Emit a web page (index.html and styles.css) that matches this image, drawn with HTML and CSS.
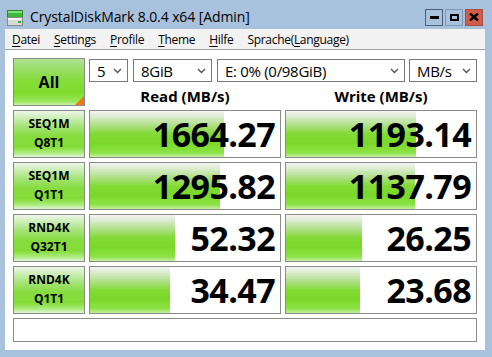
FILE: index.html
```html
<!DOCTYPE html>
<html>
  <head>
    <title>CrystalDiskMark</title>
    <link rel="stylesheet" href="styles.css">
  </head>
  <body>
    <div class="window">
      <div class="titlebar">
        <svg class="app-icon" width="16" height="16" viewBox="0 0 16 16">
          <rect x="0.5" y="0.5" width="15" height="7" fill="#3cb83c" stroke="#2a8a2a"/>
          <rect x="1" y="1" width="14" height="2" fill="#7ee07e"/>
          <rect x="0.5" y="7.5" width="15" height="8" fill="#d8d8d8" stroke="#8a8a8a"/>
          <rect x="1" y="8" width="14" height="2" fill="#f4f4f4"/>
          <rect x="11" y="11" width="3" height="2" fill="#2fb82f"/>
        </svg>
        <span class="title">CrystalDiskMark 8.0.4 x64 [Admin]</span>
        <div class="caption">
          <span class="cap-btn min"><svg width="9" height="3"><rect width="9" height="3" fill="#000"/></svg></span>
          <span class="cap-btn max"><svg width="9" height="7"><rect x="1" y="1" width="7" height="5" fill="none" stroke="#000" stroke-width="2"/></svg></span>
          <span class="cap-btn close"><svg width="10" height="8"><path d="M1 0.5 L9 7.5 M9 0.5 L1 7.5" stroke="#000" stroke-width="2.4"/></svg></span>
        </div>
      </div>
      <div class="client">
        <div class="menubar">
          <span class="menu-item"><u>D</u>atei</span>
          <span class="menu-item"><u>S</u>ettings</span>
          <span class="menu-item"><u>P</u>rofile</span>
          <span class="menu-item"><u>T</u>heme</span>
          <span class="menu-item"><u>H</u>ilfe</span>
          <span class="menu-item">Sprache(<u>L</u>anguage)</span>
        </div>
        <div class="bench">
          <div class="btn all">All<span class="corner"></span></div>
          <div class="head">
            <div class="combos">
              <div class="combo c-count">5<svg class="chev" width="9" height="6"><polyline points="1,1 4.5,4.5 8,1" fill="none" stroke="#555" stroke-width="1.4"/></svg></div>
              <div class="combo c-size">8GiB<svg class="chev" width="9" height="6"><polyline points="1,1 4.5,4.5 8,1" fill="none" stroke="#555" stroke-width="1.4"/></svg></div>
              <div class="combo c-drive">E: 0% (0/98GiB)<svg class="chev" width="9" height="6"><polyline points="1,1 4.5,4.5 8,1" fill="none" stroke="#555" stroke-width="1.4"/></svg></div>
              <div class="combo c-unit">MB/s<svg class="chev" width="9" height="6"><polyline points="1,1 4.5,4.5 8,1" fill="none" stroke="#555" stroke-width="1.4"/></svg></div>
            </div>
            <div class="heads">
              <div>Read (MB/s)</div>
              <div>Write (MB/s)</div>
            </div>
          </div>

          <div class="btn test">SEQ1M<br>Q8T1</div>
          <div class="cell"><div class="fill" style="width:134px"></div><span class="num">1664.27</span></div>
          <div class="cell"><div class="fill" style="width:130px"></div><span class="num">1193.14</span></div>

          <div class="btn test">SEQ1M<br>Q1T1</div>
          <div class="cell"><div class="fill" style="width:130px"></div><span class="num">1295.82</span></div>
          <div class="cell"><div class="fill" style="width:129px"></div><span class="num">1137.79</span></div>

          <div class="btn test">RND4K<br>Q32T1</div>
          <div class="cell"><div class="fill" style="width:85px"></div><span class="num">52.32</span></div>
          <div class="cell"><div class="fill" style="width:76px"></div><span class="num">26.25</span></div>

          <div class="btn test">RND4K<br>Q1T1</div>
          <div class="cell"><div class="fill" style="width:80px"></div><span class="num">34.47</span></div>
          <div class="cell"><div class="fill" style="width:74px"></div><span class="num">23.68</span></div>

          <div class="status"></div>
        </div>
      </div>
    </div>
  </body>
</html>
```

FILE: styles.css
```css
html, body {
  margin: 0;
  padding: 0;
}
body {
  background-color: #a8c1dd;
  font-family: "Open Sans", "Noto Sans", sans-serif;
  color: #000;
}
.window {
  width: 492px;
  height: 357px;
}
.titlebar {
  height: 29px;
  display: flex;
  align-items: center;
  padding-left: 7px;
  padding-right: 9px;
  box-sizing: border-box;
}
.app-icon {
  margin-top: 7px;
  flex: none;
}
.title {
  margin-left: 7px;
  margin-top: 4px;
  font-size: 14px;
  letter-spacing: -0.1px;
}
.caption {
  margin-left: auto;
  display: flex;
  gap: 2px;
  margin-top: 5px;
}
.cap-btn {
  width: 18px;
  height: 17px;
  box-sizing: border-box;
  border: 1px solid #5b6f8c;
  display: flex;
  align-items: center;
  justify-content: center;
}
.cap-btn.min {
  border-color: #4d5e78;
}
.cap-btn.max {
  border-color: #7f96b4;
}
.cap-btn.close {
  background-color: #cf5d49;
  border-color: #a8503f;
}
.client {
  margin: 0 7px 0 5px;
  height: 321px;
  background-color: #fff;
}
.menubar {
  height: 20px;
  background-color: #f2f2f2;
  border-bottom: 1px solid #a0a0a0;
  display: flex;
  align-items: center;
  font-size: 12px;
  letter-spacing: -0.3px;
}
.menu-item {
  padding: 0 7px;
}
.menu-item u {
  text-underline-offset: 2px;
}
.bench {
  display: grid;
  grid-template-columns: 72px 192px 192px;
  grid-template-rows: 48px 48px 48px 48px 48px 24px;
  column-gap: 4px;
  row-gap: 4px;
  padding: 8px 0 0 8px;
}
.btn {
  box-sizing: border-box;
  border: 1px solid #8a8a8a;
  background: linear-gradient(to bottom, #b0e294 0%, #9ade6a 20%, #84dc38 50%, #80dc30 75%, #98e65c 92%, #c8f2a8 100%);
  display: flex;
  align-items: center;
  justify-content: center;
  text-align: center;
  font-weight: bold;
}
.btn.all {
  position: relative;
  font-size: 16px;
}
.corner {
  position: absolute;
  right: 0;
  bottom: 0;
  width: 0;
  height: 0;
  border-left: 9px solid transparent;
  border-bottom: 9px solid #f07a12;
}
.btn.test {
  font-size: 12px;
  line-height: 19px;
  padding-bottom: 2px;
  background: linear-gradient(to bottom, #eef6ea 0%, #cdeeb6 15%, #a2e274 35%, #86dc3e 55%, #84dc38 78%, #a8ea78 90%, #e0f6d2 100%);
}
.head {
  grid-column: 2 / 4;
  display: flex;
  flex-direction: column;
}
.combos {
  display: flex;
  gap: 5px;
  height: 23px;
  margin-top: 1px;
}
.combo {
  box-sizing: border-box;
  border: 1px solid #7a7a7a;
  background-color: #fff;
  display: flex;
  align-items: center;
  padding-left: 7px;
  padding-right: 5px;
  font-size: 15px;
  letter-spacing: -0.3px;
}
.chev {
  margin-left: auto;
}
.c-count { width: 39px; }
.c-size { width: 79px; }
.c-drive { width: 188px; }
.c-unit { width: 68px; margin-left: -1px; }
.heads {
  display: grid;
  grid-template-columns: 192px 192px;
  column-gap: 4px;
  flex: 1;
  align-items: center;
  padding-top: 3px;
  font-size: 15px;
  font-weight: bold;
  text-align: center;
}
.cell {
  position: relative;
  box-sizing: border-box;
  border: 1px solid #8a8a8a;
  background-color: #fff;
  display: flex;
  align-items: center;
  justify-content: flex-end;
  padding-right: 5px;
}
.fill {
  position: absolute;
  left: 0;
  top: 0;
  bottom: 0;
  background: linear-gradient(to bottom, #f4f4f4 0%, #dcecd0 12%, #b2e08c 30%, #82da34 50%, #7ad82a 70%, #8ce244 90%, #c4f0a0 100%);
}
.num {
  position: relative;
  font-size: 34px;
  font-weight: bold;
  letter-spacing: -0.6px;
}
.status {
  grid-column: 1 / 4;
  box-sizing: border-box;
  border: 1px solid #8a8a8a;
  background-color: #fff;
}
```
